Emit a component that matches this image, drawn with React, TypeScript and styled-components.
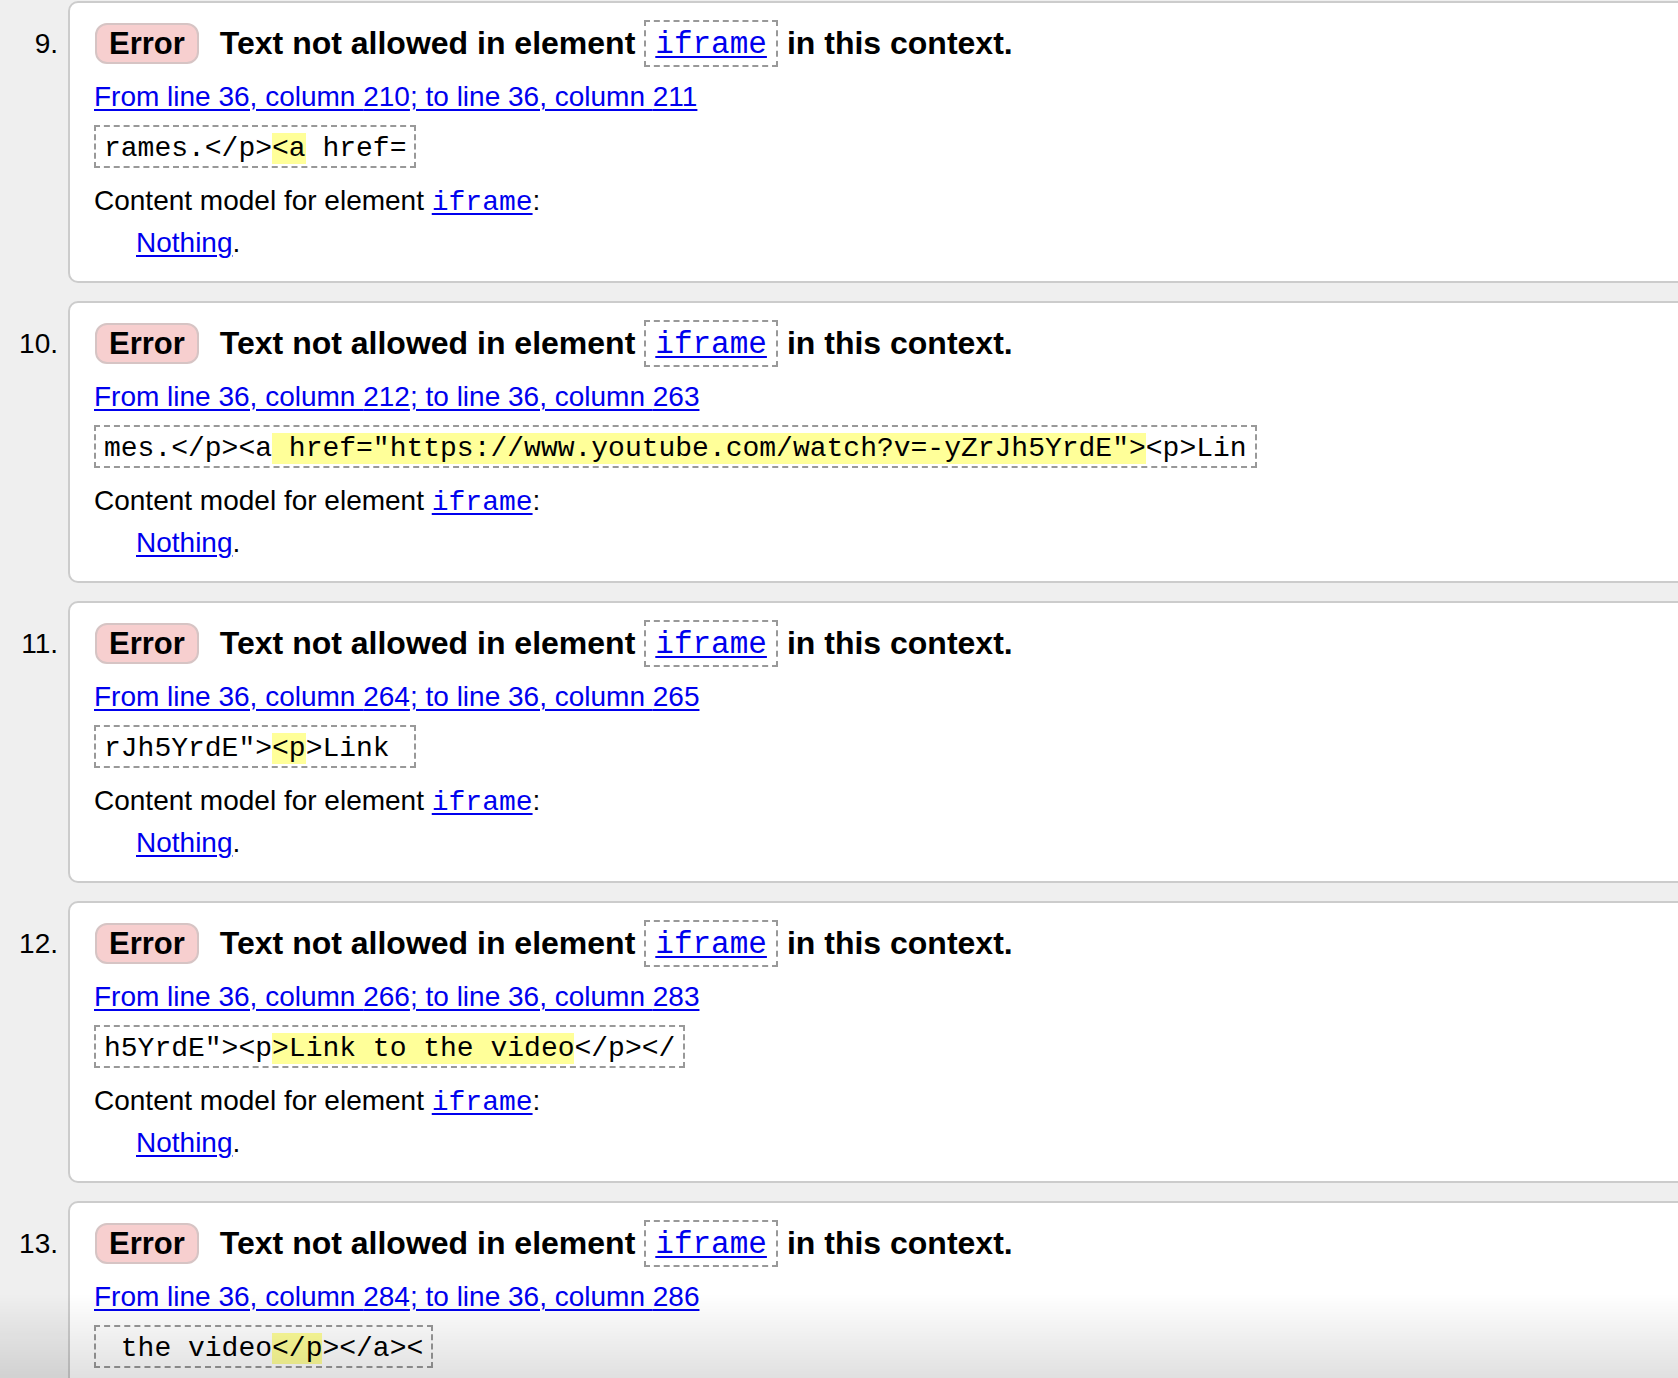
import styled, { createGlobalStyle } from 'styled-components';

const GlobalStyle = createGlobalStyle`
  html, body {
    margin: 0;
    padding: 0;
    background: #efefef;
    overflow: hidden;
  }
  body {
    font-family: "Liberation Sans", Arial, Helvetica, sans-serif;
    color: #000;
  }
`;

const messages = [
  { n: 9, from: 210, to: 211, before: 'rames.</p>', mark: '<a', after: ' href=' },
  {
    n: 10,
    from: 212,
    to: 263,
    before: 'mes.</p><a',
    mark: ' href="https://www.youtube.com/watch?v=-yZrJh5YrdE">',
    after: '<p>Lin',
  },
  { n: 11, from: 264, to: 265, before: 'rJh5YrdE">', mark: '<p', after: '>Link ' },
  { n: 12, from: 266, to: 283, before: 'h5YrdE"><p', mark: '>Link to the video', after: '</p></' },
  { n: 13, from: 284, to: 286, before: ' the video', mark: '</p', after: '></a><' },
];

const List = styled.ol`
  list-style: none;
  margin: 0;
  padding: 1px 0 0 0;
  width: calc(100vw + 24px);
  display: flex;
  flex-direction: column;
  gap: 18px;
`;

const Item = styled.li`
  display: grid;
  grid-template-columns: 58px 1fr;
  column-gap: 10px;
  align-items: start;
`;

const Num = styled.span`
  margin-top: 19px;
  font-size: 28px;
  line-height: 47px;
  text-align: right;
`;

const Card = styled.div`
  background: #fff;
  border: 2px solid #cccccc;
  border-radius: 10px;
  padding: 17px 0 21px 24px;
`;

const TitleRow = styled.p`
  margin: 0;
  height: 47px;
  display: flex;
  align-items: center;
  font-size: 32px;
  font-weight: bold;
  white-space: nowrap;
`;

const Badge = styled.span`
  box-sizing: border-box;
  height: 41px;
  display: inline-flex;
  align-items: center;
  padding: 0 12px;
  margin: 0 21px 0 1px;
  background: #f7cfcf;
  border: 2px solid #d6c4c4;
  border-radius: 12px;
  font-size: 31px;
`;

const Link = styled.a`
  color: #0000ee;
  text-decoration: underline;
  text-decoration-thickness: 2px;
  text-underline-offset: 3px;
`;

const CodeLink = styled(Link)`
  font-family: "Liberation Mono", "Courier New", monospace;
  font-weight: normal;
`;

const CodeBox = styled.span`
  box-sizing: border-box;
  height: 47px;
  display: inline-flex;
  align-items: center;
  padding: 2px 9px 0;
  margin: 0 9px;
  border: 2px dashed #999;
  font-size: 31px;
`;

const Line = styled.p<{ $top: number; $indent?: number }>`
  margin: ${(p) => p.$top}px 0 0 ${(p) => p.$indent ?? 0}px;
  font-size: 28px;
  line-height: 34px;
  white-space: nowrap;
`;

const Extract = styled.code`
  display: inline-block;
  margin-top: 11px;
  padding: 4px 8px 0;
  border: 2px dashed #999;
  font-family: "Liberation Mono", "Courier New", monospace;
  font-size: 28px;
  line-height: 35px;
  white-space: pre;
`;

const Mark = styled.mark`
  background: #ffff99;
  color: inherit;
`;

const Fade = styled.div`
  position: fixed;
  left: 0;
  right: 0;
  bottom: 0;
  height: 84px;
  pointer-events: none;
  background: linear-gradient(rgba(0, 0, 0, 0), rgba(0, 0, 0, 0.12));
`;

export default function App() {
  return (
    <>
      <GlobalStyle />
      <List>
        {messages.map((m) => (
          <Item key={m.n}>
            <Num>{m.n}.</Num>
            <Card>
              <TitleRow>
                <Badge>Error</Badge>
                <span>Text not allowed in element</span>
                <CodeBox>
                  <CodeLink href="#">iframe</CodeLink>
                </CodeBox>
                <span>in this context.</span>
              </TitleRow>
              <Line $top={13}>
                <Link href="#">
                  From line 36, column {m.from}; to line 36, column {m.to}
                </Link>
              </Line>
              <Extract>
                {m.before}
                <Mark>{m.mark}</Mark>
                {m.after}
              </Extract>
              <Line $top={16}>
                Content model for element <CodeLink href="#">iframe</CodeLink>:
              </Line>
              <Line $top={6} $indent={42}>
                <Link href="#">Nothing</Link>.
              </Line>
            </Card>
          </Item>
        ))}
      </List>
      <Fade />
    </>
  );
}
